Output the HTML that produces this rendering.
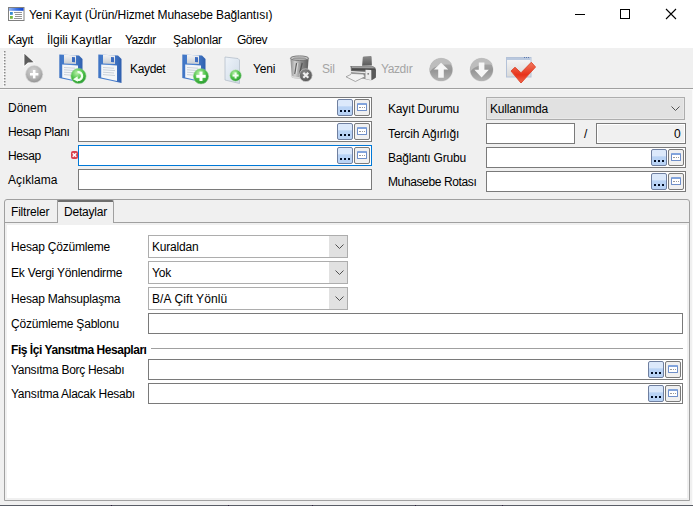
<!DOCTYPE html>
<html><head><meta charset="utf-8">
<style>
*{box-sizing:border-box;margin:0;padding:0}
html,body{width:693px;height:506px;overflow:hidden;background:#f0f0f0;font-family:"Liberation Sans",sans-serif;font-size:12px;color:#000}
.a{position:absolute}
.t{position:absolute;white-space:nowrap;line-height:14px;height:14px;letter-spacing:-0.2px}
.inp{position:absolute;background:#fff;border:1px solid #7a7a7a}
.btn3{position:absolute;width:16px;height:17px;border:1px solid #6f7f9f;border-radius:2px;background:linear-gradient(#dce9fb 0,#dce9fb 40%,#b9d3f5 45%,#b9d3f5 100%)}
.btn3 i{position:absolute;top:10px;width:2px;height:2px;background:#000c22;box-shadow:0 0 0.3px #000c22}
.btnc{position:absolute;width:16px;height:17px;border:1px solid #7a7a7a;border-radius:2px;background:#f0f0f0}
.btnc b{position:absolute;left:2px;top:3px;width:10px;height:8px;border:1px solid #6f8fc9;background:#fff;border-top:2.5px solid #82a4dc;border-radius:1px}
.btnc b:after{content:"";position:absolute;left:1px;top:0px;width:6px;height:2px;border-bottom:1px dotted #9a9a9a}
.btnc u{position:absolute;left:4px;top:8px;width:6px;height:1px;border-top:1px dotted #999}
.combo{position:absolute;background:#fff;border:1px solid #adadad}
.combo .dd{position:absolute;right:0;top:0;bottom:0;width:18px;background:#e1e1e1}
.chev{position:absolute;width:9px;height:5px}
</style></head><body>
<!-- title bar -->
<div class="a" style="left:0;top:0;width:693px;height:48px;background:#fff"></div>
<svg class="a" style="left:8px;top:7px" width="17" height="15" viewBox="0 0 17 15">
 <defs><linearGradient id="tbg" x1="0" y1="0" x2="1" y2="0"><stop offset="0" stop-color="#9ab8f2"/><stop offset="0.5" stop-color="#3f74e4"/><stop offset="1" stop-color="#1244d0"/></linearGradient></defs>
 <rect x="0.5" y="0.5" width="15.5" height="13" fill="#fff" stroke="#808080"/>
 <rect x="1" y="1" width="14.5" height="2.8" fill="url(#tbg)"/>
 <rect x="2" y="5" width="2.8" height="2.8" fill="#3a8ad0"/>
 <rect x="2" y="9" width="2.8" height="2.8" fill="#78b840"/>
 <rect x="6" y="5" width="8" height="0.9" fill="#8a8a8a"/>
 <rect x="7" y="7" width="7" height="0.9" fill="#8a8a8a"/>
 <rect x="7" y="9" width="7" height="0.9" fill="#8a8a8a"/>
 <rect x="6" y="11" width="8" height="0.9" fill="#8a8a8a"/>
</svg>
<div class="t" style="left:29px;top:8px;letter-spacing:-0.1px">Yeni Kayıt (Ürün/Hizmet Muhasebe Bağlantısı)</div>
<div class="a" style="left:575px;top:14px;width:10px;height:1px;background:#000"></div>
<div class="a" style="left:620px;top:9px;width:10px;height:10px;border:1px solid #000"></div>
<svg class="a" style="left:665px;top:8px" width="12" height="12" viewBox="0 0 12 12"><path d="M1 1L11 11M11 1L1 11" stroke="#000" stroke-width="1.1"/></svg>
<!-- menu -->
<div class="t" style="left:8px;top:33px;letter-spacing:-0.5px">Kayıt</div>
<div class="t" style="left:47px;top:33px;letter-spacing:0px">İlgili Kayıtlar</div>
<div class="t" style="left:125px;top:33px;letter-spacing:-0.5px">Yazdır</div>
<div class="t" style="left:173px;top:33px">Şablonlar</div>
<div class="t" style="left:237px;top:33px;letter-spacing:-0.55px">Görev</div>
<!-- toolbar -->
<div class="a" style="left:0;top:88px;width:693px;height:1px;background:#a0a0a0"></div>
<div class="a" style="left:0;top:89px;width:693px;height:1px;background:#f8f8f8"></div>

<!-- toolbar icons -->
<svg class="a" style="left:1px;top:50px" width="6" height="38" viewBox="0 0 6 38"><rect x="3" y="1" width="1.5" height="1.5" fill="#8a8a8a"/><rect x="2" y="2.5" width="1.2" height="1.2" fill="#fff"/><rect x="3" y="4" width="1.5" height="1.5" fill="#8a8a8a"/><rect x="2" y="5.5" width="1.2" height="1.2" fill="#fff"/><rect x="3" y="7" width="1.5" height="1.5" fill="#8a8a8a"/><rect x="2" y="8.5" width="1.2" height="1.2" fill="#fff"/><rect x="3" y="10" width="1.5" height="1.5" fill="#8a8a8a"/><rect x="2" y="11.5" width="1.2" height="1.2" fill="#fff"/><rect x="3" y="13" width="1.5" height="1.5" fill="#8a8a8a"/><rect x="2" y="14.5" width="1.2" height="1.2" fill="#fff"/><rect x="3" y="16" width="1.5" height="1.5" fill="#8a8a8a"/><rect x="2" y="17.5" width="1.2" height="1.2" fill="#fff"/><rect x="3" y="19" width="1.5" height="1.5" fill="#8a8a8a"/><rect x="2" y="20.5" width="1.2" height="1.2" fill="#fff"/><rect x="3" y="22" width="1.5" height="1.5" fill="#8a8a8a"/><rect x="2" y="23.5" width="1.2" height="1.2" fill="#fff"/><rect x="3" y="25" width="1.5" height="1.5" fill="#8a8a8a"/><rect x="2" y="26.5" width="1.2" height="1.2" fill="#fff"/><rect x="3" y="28" width="1.5" height="1.5" fill="#8a8a8a"/><rect x="2" y="29.5" width="1.2" height="1.2" fill="#fff"/><rect x="3" y="31" width="1.5" height="1.5" fill="#8a8a8a"/><rect x="2" y="32.5" width="1.2" height="1.2" fill="#fff"/><rect x="3" y="34" width="1.5" height="1.5" fill="#8a8a8a"/><rect x="2" y="35.5" width="1.2" height="1.2" fill="#fff"/></svg>
<svg class="a" style="left:20px;top:50px" width="28" height="36" viewBox="0 0 28 36">
 <defs>
  <radialGradient id="gc" cx="0.45" cy="0.3" r="0.8"><stop offset="0" stop-color="#d6d6d6"/><stop offset="0.6" stop-color="#b0b0b0"/><stop offset="1" stop-color="#8a8a8a"/></radialGradient>
 </defs>
 <path d="M3.6 2.6L3.6 17.6L8 13.6L15.2 13Z" fill="#fff"/>
 <path d="M4.4 3.8L4.4 15.8L8 12.6L13.6 12.2Z" fill="#5c5c5c"/>
 <circle cx="14.2" cy="24.2" r="8.9" fill="#cfcfcf"/>
 <circle cx="14.2" cy="24.2" r="8.1" fill="url(#gc)"/>
 <rect x="10" y="23" width="8.4" height="2.5" fill="#fff"/>
 <rect x="12.95" y="20" width="2.5" height="8.4" fill="#fff"/>
</svg>
<svg width="0" height="0" style="position:absolute">
 <defs>
  <linearGradient id="fb" x1="0" y1="0" x2="1" y2="0"><stop offset="0" stop-color="#3f74c4"/><stop offset="0.5" stop-color="#4f86d4"/><stop offset="1" stop-color="#2f5fae"/></linearGradient>
  <linearGradient id="fs" x1="0" y1="0" x2="0" y2="1"><stop offset="0" stop-color="#f4f4f4"/><stop offset="1" stop-color="#c9cdd3"/></linearGradient>
  <radialGradient id="gg" cx="0.4" cy="0.3" r="0.8"><stop offset="0" stop-color="#b8f0a8"/><stop offset="0.5" stop-color="#4fc24a"/><stop offset="1" stop-color="#1f8f2a"/></radialGradient>
  <symbol id="floppy" viewBox="0 0 25 30">
   <path d="M0.3 0.5L20 1.5L23.5 5L23.5 29L0.3 24Z" fill="url(#fb)"/>
   <path d="M5 0.8L17 1.4L17 10L5 9.5Z" fill="url(#fs)"/>
   <path d="M13 3L16 3.2L16 8.3L13 8.1Z" fill="#3c6cc0"/>
   <path d="M3.2 10.5L19 11.5L19 27L3.2 23.5Z" fill="#f4f6f8"/>
   <g stroke="#b8c0cc" stroke-width="0.7"><path d="M5 13.5L16 14.2M5 15.8L17 16.6M5 18.2L16 19M5 20.6L17 21.5"/></g>
  </symbol>
 </defs>
</svg>
<svg class="a" style="left:59px;top:54px" width="25" height="30"><use href="#floppy"/></svg>
<svg class="a" style="left:66px;top:64px" width="22" height="22" viewBox="0 0 22 22">
 <circle cx="12.5" cy="12" r="7.6" fill="url(#gg)" stroke="#8fd08a" stroke-width="0.6"/>
 <path d="M11.5 8.2A3.9 3.9 0 1 1 10.6 15.6" stroke="#f2fff0" stroke-width="2.3" fill="none"/>
 <path d="M7 15.2L11.6 12.2L12 17.8Z" fill="#f2fff0"/>
</svg>
<svg class="a" style="left:98px;top:54px" width="25" height="30"><use href="#floppy"/></svg>
<svg class="a" style="left:182px;top:54px" width="25" height="30"><use href="#floppy"/></svg>
<svg class="a" style="left:188px;top:64px" width="22" height="22" viewBox="0 0 22 22">
 <circle cx="13" cy="12.3" r="7.6" fill="url(#gg)" stroke="#8fd08a" stroke-width="0.6"/>
 <rect x="8.3" y="10.8" width="9.4" height="3" fill="#fff"/>
 <rect x="11.5" y="7.6" width="3" height="9.4" fill="#fff"/>
</svg>
<svg class="a" style="left:222px;top:55px" width="22" height="30" viewBox="0 0 22 30">
 <defs><linearGradient id="pg" x1="0" y1="0" x2="1" y2="1"><stop offset="0" stop-color="#eef3f9"/><stop offset="1" stop-color="#cfdbe8"/></linearGradient></defs>
 <path d="M3 2L16 3.5L17.5 5L17.5 28.5L3 25Z" fill="url(#pg)" stroke="#b5bfca" stroke-width="0.8"/>
 <circle cx="13.6" cy="20.5" r="5.8" fill="url(#gg)" stroke="#c8e0c8" stroke-width="0.6"/>
 <rect x="10.6" y="19.5" width="6" height="2" fill="#f4fff4"/>
 <rect x="12.6" y="17.5" width="2" height="6" fill="#f4fff4"/>
</svg>
<svg class="a" style="left:288px;top:54px" width="28" height="28" viewBox="0 0 28 28">
 <defs>
  <linearGradient id="tb" x1="0" y1="0" x2="1" y2="0"><stop offset="0" stop-color="#8c8c8c"/><stop offset="0.25" stop-color="#cfcfcf"/><stop offset="0.6" stop-color="#8a8a8a"/><stop offset="1" stop-color="#5e5e5e"/></linearGradient>
  <radialGradient id="tx" cx="0.4" cy="0.3" r="0.8"><stop offset="0" stop-color="#8a8a8a"/><stop offset="1" stop-color="#505050"/></radialGradient>
 </defs>
 <path d="M2.4 4.5L20.6 4.5L19.2 23.2C16 25.3 7 25.3 3.8 23.2Z" fill="url(#tb)"/>
 <path d="M3.8 21.5C7 23.5 16 23.5 19.3 21.5L19.2 23.2C16 25.3 7 25.3 3.8 23.2Z" fill="#d8d8d8"/>
 <ellipse cx="11.5" cy="4.2" rx="9.1" ry="2.3" fill="#cacaca" stroke="#707070" stroke-width="0.9"/>
 <ellipse cx="11.5" cy="4.4" rx="7" ry="1.2" fill="#9a9a9a"/>
 <path d="M8.6 9L6.8 20M14.2 9L11.5 20" stroke="#4a4a4a" stroke-width="1.3" opacity="0.8"/>
 <path d="M9.8 9L8 20" stroke="#eee" stroke-width="1" opacity="0.7"/>
 <circle cx="17.8" cy="21.2" r="6.4" fill="url(#tx)" stroke="#d0d0d0" stroke-width="0.7"/>
 <path d="M15.3 18.7L20.3 23.7M20.3 18.7L15.3 23.7" stroke="#f0f0f0" stroke-width="2.1"/>
</svg>
<svg class="a" style="left:344px;top:54px" width="34" height="30" viewBox="0 0 34 30">
 <defs><linearGradient id="pp" x1="0" y1="0" x2="0" y2="1"><stop offset="0" stop-color="#8a8a8a"/><stop offset="1" stop-color="#5a5a5a"/></linearGradient>
 <linearGradient id="pf" x1="0" y1="0" x2="0" y2="1"><stop offset="0" stop-color="#6a6a6a"/><stop offset="1" stop-color="#9a9a9a"/></linearGradient></defs>
 <path d="M18.8 3.2Q19 2.4 20 2.4L26.8 2.1Q27.5 2.1 27.6 3L27.9 11.5L18.1 11.8Z" fill="url(#pp)"/>
 <path d="M7 12Q6 12.2 6 13.5L6.4 19Q6.6 21 8 22.2L26 26.3Q27.5 26.6 29 25.6L31.2 24Q32 23.4 32 22L32 16Q32 14.2 30.5 13.2L29 12.2Z" fill="url(#pf)"/>
 <path d="M7.5 12.2L28.6 12.4L31 14.5L8 14.2Z" fill="#9c9c9c"/>
 <path d="M8 14.2L31 14.5L31.5 16.5L7.5 16.6Z" fill="#4a4a4a"/>
 <path d="M7 17L21.5 18L21.5 19.2L7.2 18.3Z" fill="#e8e8e8"/>
 <path d="M21.5 15.8L27.5 16L27.5 26.2L21.5 24.8Z" fill="#ececec"/>
 <path d="M27.5 16L31.8 15.8L31.8 23.5L27.5 26.2Z" fill="#5a5a5a"/>
 <circle cx="24.2" cy="19.8" r="0.9" fill="#777"/>
 <path d="M2 22.8L8.7 19.5L19.5 20.1L20.8 22.8L11.4 27.5Z" fill="#f2f2f2" stroke="#8a8a8a" stroke-width="0.7"/>
 <path d="M6.2 13L6.6 19L8.2 22" fill="none" stroke="#f6f6f6" stroke-width="0.9"/>
</svg>
<svg class="a" style="left:426px;top:55px" width="60" height="30" viewBox="0 0 60 30">
 <defs>
  <linearGradient id="cg" x1="0" y1="0" x2="0" y2="1"><stop offset="0" stop-color="#b0b0b0"/><stop offset="0.55" stop-color="#969696"/><stop offset="1" stop-color="#b4b4b4"/></linearGradient>
 </defs>
</svg>
<svg class="a" style="left:426px;top:55px" width="30" height="30" viewBox="0 0 30 30">
 <circle cx="15.1" cy="14.7" r="12.6" fill="#e2e2e2" stroke="#f8f8f8" stroke-width="0.6"/>
 <circle cx="15.1" cy="14.7" r="11.4" fill="url(#cg)"/>
 <path d="M3.8 17C7 11.5 13 9 26 9.5C24 5.5 20 3.3 15.1 3.3C8.8 3.3 3.7 8.4 3.7 14.7Z" fill="#bdbdbd"/>
 <path d="M15.1 7.7L22.2 14.5L17.8 14.5L17.8 22.8L12.2 22.8L12.2 14.5L8 14.5Z" fill="#f6f6f6"/>
</svg>
<svg class="a" style="left:467px;top:55px" width="30" height="30" viewBox="0 0 30 30">
 <circle cx="14.6" cy="14.7" r="12.6" fill="#e2e2e2" stroke="#f8f8f8" stroke-width="0.6"/>
 <circle cx="14.6" cy="14.7" r="11.4" fill="url(#cg)"/>
 <path d="M3.3 17C6.5 11.5 12.5 9 25.5 9.5C23.5 5.5 19.5 3.3 14.6 3.3C8.3 3.3 3.2 8.4 3.2 14.7Z" fill="#bdbdbd"/>
 <path d="M11.8 7.5L17.4 7.5L17.4 14.8L21.8 14.8L14.6 22.4L7.4 14.8L11.8 14.8Z" fill="#f6f6f6"/>
</svg>
<svg class="a" style="left:504px;top:55px" width="34" height="30" viewBox="0 0 34 30">
 <defs>
  <linearGradient id="wg" x1="0" y1="0" x2="0" y2="1"><stop offset="0" stop-color="#f8f8f8"/><stop offset="1" stop-color="#d8d8d8"/></linearGradient>
  <linearGradient id="rg" x1="0" y1="0" x2="0" y2="1"><stop offset="0" stop-color="#f07a60"/><stop offset="0.6" stop-color="#e8321a"/><stop offset="1" stop-color="#f06a50"/></linearGradient>
 </defs>
 <rect x="2.5" y="2.5" width="24.5" height="19.5" fill="url(#wg)" stroke="#b4c2d8"/>
 <rect x="3" y="3" width="23.5" height="2" fill="#b9c8de"/>
 <path d="M20 2.5h1M22 2.5h1M24 2.5h1" stroke="#5a78b0" stroke-width="1"/>
 <path d="M7 16L11 12.3L17 17.8L27.3 7.3L31.5 12L17 28Z" fill="url(#rg)" stroke="#e04a30" stroke-width="1" stroke-linejoin="round"/>
</svg>
<div class="t" style="left:130px;top:62px;letter-spacing:-0.35px">Kaydet</div>
<div class="t" style="left:253px;top:62px">Yeni</div>
<div class="t" style="left:322px;top:62px;color:#a4a4a4">Sil</div>
<div class="t" style="left:381px;top:62px;color:#a4a4a4;letter-spacing:-0.4px">Yazdır</div>

<!-- form left -->
<div class="t" style="left:8px;top:101px;letter-spacing:0px">Dönem</div>
<div class="t" style="left:8px;top:125px;letter-spacing:-0.35px">Hesap Planı</div>
<div class="t" style="left:8px;top:149px;letter-spacing:-0.4px">Hesap</div>
<div class="t" style="left:8px;top:173px;letter-spacing:0px">Açıklama</div>
<div class="inp" style="left:78px;top:97px;width:294px;height:21px"></div>
<div class="inp" style="left:78px;top:121px;width:294px;height:21px"></div>
<div class="inp" style="left:78px;top:145px;width:294px;height:21px;border-color:#0078d7"></div>
<div class="inp" style="left:78px;top:169px;width:294px;height:21px"></div>
<div class="btn3" style="left:337px;top:99px"><i style="left:2px"></i><i style="left:6px"></i><i style="left:10px"></i></div>
<div class="btnc" style="left:354px;top:99px"><b></b></div>
<div class="btn3" style="left:337px;top:123px"><i style="left:2px"></i><i style="left:6px"></i><i style="left:10px"></i></div>
<div class="btnc" style="left:354px;top:123px"><b></b></div>
<div class="btn3" style="left:337px;top:147px"><i style="left:2px"></i><i style="left:6px"></i><i style="left:10px"></i></div>
<div class="btnc" style="left:354px;top:147px"><b></b></div>
<div class="a" style="left:71px;top:151px;width:7px;height:8px;background:#d8404c;border-radius:2px"></div>
<svg class="a" style="left:71px;top:151px" width="7" height="8"><path d="M1.7 2.2L5.3 5.8M5.3 2.2L1.7 5.8" stroke="#fff" stroke-width="1.5"/></svg>

<!-- form right -->
<div class="t" style="left:388px;top:102px">Kayıt Durumu</div>
<div class="t" style="left:388px;top:127px;letter-spacing:-0.1px">Tercih Ağırlığı</div>
<div class="t" style="left:388px;top:151px">Bağlantı Grubu</div>
<div class="t" style="left:388px;top:175px;letter-spacing:-0.38px">Muhasebe Rotası</div>
<div class="combo" style="left:486px;top:97px;width:199px;height:23px;background:#e1e1e1;box-shadow:inset 0 0 0 1px #e8e8e8"></div>
<div class="t" style="left:490px;top:102px">Kullanımda</div>
<svg class="chev" style="left:671px;top:106px" viewBox="0 0 9 5"><path d="M0.5 0.5L4.5 4.5L8.5 0.5" fill="none" stroke="#505050" stroke-width="1"/></svg>
<div class="inp" style="left:486px;top:123px;width:89px;height:21px"></div>
<div class="t" style="left:584px;top:127px">/</div>
<div class="inp" style="left:596px;top:123px;width:90px;height:21px;background:#f0f0f0;box-shadow:inset 0 0 0 1px #fff"></div>
<div class="t" style="left:674px;top:127px">0</div>
<div class="inp" style="left:486px;top:147px;width:200px;height:21px"></div>
<div class="inp" style="left:486px;top:171px;width:200px;height:21px"></div>
<div class="btn3" style="left:651px;top:149px"><i style="left:2px"></i><i style="left:6px"></i><i style="left:10px"></i></div>
<div class="btnc" style="left:668px;top:149px"><b></b></div>
<div class="btn3" style="left:651px;top:173px"><i style="left:2px"></i><i style="left:6px"></i><i style="left:10px"></i></div>
<div class="btnc" style="left:668px;top:173px"><b></b></div>

<!-- tab panel -->
<div class="a" style="left:4px;top:199px;width:686px;height:302px;border:1px solid #a0a0a0;border-radius:3px 3px 0 0"></div>
<div class="a" style="left:5px;top:223px;width:684px;height:277px;background:#fff;border:2px solid #f0f0f0"></div>
<div class="a" style="left:5px;top:222px;width:684px;height:1px;background:#a0a0a0"></div>
<div class="a" style="left:57px;top:199px;width:1px;height:23px;background:#a0a0a0"></div>
<div class="a" style="left:57px;top:200px;width:57px;height:23px;background:#f0f0f0;border:1px solid #a0a0a0;border-top:2px solid #6e6e6e;border-bottom:none;border-radius:2px 2px 0 0"></div>
<div class="a" style="left:58px;top:222px;width:55px;height:2px;background:#f0f0f0"></div>
<div class="t" style="left:11px;top:205px">Filtreler</div>
<div class="t" style="left:64px;top:205px">Detaylar</div>

<!-- tab content -->
<div class="t" style="left:11px;top:240px">Hesap Çözümleme</div>
<div class="t" style="left:11px;top:266px">Ek Vergi Yönlendirme</div>
<div class="t" style="left:11px;top:292px">Hesap Mahsuplaşma</div>
<div class="t" style="left:11px;top:317px">Çözümleme Şablonu</div>
<div class="combo" style="left:148px;top:235px;width:200px;height:23px"><div class="dd"></div></div>
<div class="combo" style="left:148px;top:261px;width:200px;height:23px"><div class="dd"></div></div>
<div class="combo" style="left:148px;top:287px;width:200px;height:23px"><div class="dd"></div></div>
<svg class="chev" style="left:335px;top:244px" viewBox="0 0 9 5"><path d="M0.5 0.5L4.5 4.5L8.5 0.5" fill="none" stroke="#505050" stroke-width="1"/></svg>
<svg class="chev" style="left:335px;top:270px" viewBox="0 0 9 5"><path d="M0.5 0.5L4.5 4.5L8.5 0.5" fill="none" stroke="#505050" stroke-width="1"/></svg>
<svg class="chev" style="left:335px;top:296px" viewBox="0 0 9 5"><path d="M0.5 0.5L4.5 4.5L8.5 0.5" fill="none" stroke="#505050" stroke-width="1"/></svg>
<div class="t" style="left:152px;top:240px">Kuraldan</div>
<div class="t" style="left:152px;top:266px">Yok</div>
<div class="t" style="left:152px;top:292px;letter-spacing:0.1px">B/A Çift Yönlü</div>
<div class="inp" style="left:148px;top:313px;width:535px;height:21px"></div>
<div class="t" style="left:11px;top:343px;font-weight:bold;letter-spacing:-0.45px">Fiş İçi Yansıtma Hesapları</div>
<div class="a" style="left:151px;top:348px;width:532px;height:1px;background:#a0a0a0"></div>
<div class="t" style="left:11px;top:363px;letter-spacing:-0.3px">Yansıtma Borç Hesabı</div>
<div class="t" style="left:11px;top:387px;letter-spacing:-0.27px">Yansıtma Alacak Hesabı</div>
<div class="inp" style="left:148px;top:359px;width:535px;height:21px"></div>
<div class="inp" style="left:148px;top:383px;width:535px;height:21px"></div>
<div class="btn3" style="left:648px;top:361px"><i style="left:2px"></i><i style="left:6px"></i><i style="left:10px"></i></div>
<div class="btnc" style="left:665px;top:361px"><b></b></div>
<div class="btn3" style="left:648px;top:385px"><i style="left:2px"></i><i style="left:6px"></i><i style="left:10px"></i></div>
<div class="btnc" style="left:665px;top:385px"><b></b></div>

<!-- bottom -->
<div class="a" style="left:0;top:505px;width:693px;height:1px;background:#595d66"></div>
<div class="a" style="left:111px;top:505px;width:1px;height:1px;background:#2a1a3a"></div><div class="a" style="left:228px;top:505px;width:1px;height:1px;background:#2a1a3a"></div><div class="a" style="left:312px;top:505px;width:1px;height:1px;background:#2a1a3a"></div><div class="a" style="left:415px;top:505px;width:1px;height:1px;background:#2a1a3a"></div><div class="a" style="left:502px;top:505px;width:1px;height:1px;background:#2a1a3a"></div>
<div class="a" style="left:692px;top:89px;width:1px;height:416px;background:#fafafa"></div>
</body></html>
